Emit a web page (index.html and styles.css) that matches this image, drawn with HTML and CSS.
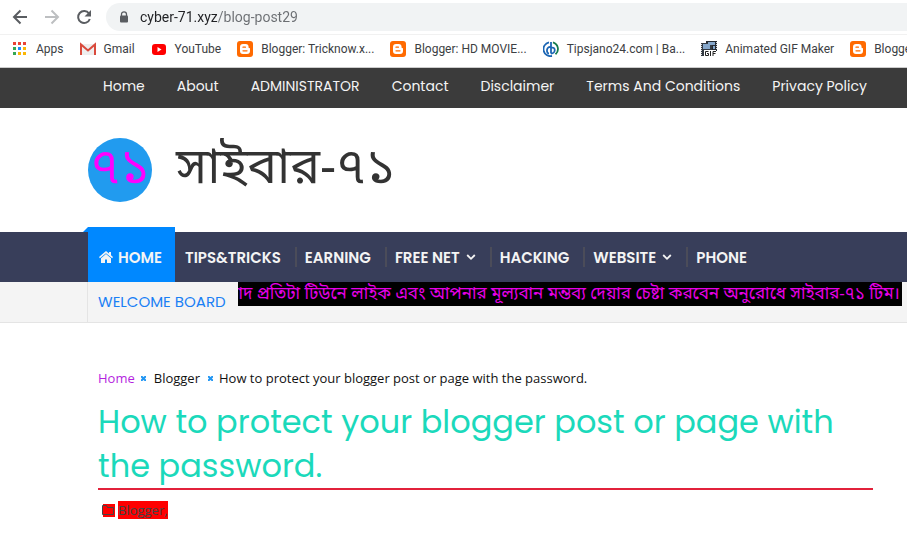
FILE: index.html
```html
<!DOCTYPE html>
<html lang="en">
<head>
  <meta charset="UTF-8">
  <title>How to protect your blogger post or page with the password.</title>
  <meta name="viewport" content="width=device-width, initial-scale=1.0">
  <link rel="stylesheet" href="styles.css">
</head>
<body>
  <svg class="defs" width="0" height="0" aria-hidden="true">
    <symbol id="blogger" viewBox="0 0 16 16">
      <rect width="16" height="16" rx="3" fill="#ff6a00"/>
      <path d="M6 3h2.600a3 3 0 0 1 3 3v.4c0 .5.3.7.8.7.4 0 .6.3.6.7V10a3 3 0 0 1-3 3H6a3 3 0 0 1-3-3V6a3 3 0 0 1 3-3z" fill="#fff"/>
      <path d="M6 6.200h2.400M6 9.800h4" stroke="#ff6a00" stroke-width="1.300" stroke-linecap="round"/>
    </symbol>
    <symbol id="chevron" viewBox="0 0 10 10">
      <path d="M1.200 3 5 6.800 8.800 3" fill="none" stroke="currentColor" stroke-width="1.800"/>
    </symbol>
  </svg>

  <div class="toolbar">
    <button type="button" class="tool" aria-label="Back">
      <svg width="16" height="16" viewBox="0 0 16 16" fill="none" stroke="#5a5d61" stroke-width="2"><path d="M15 8H2M8.500 1.500 2 8l6.500 6.500"/></svg>
    </button>
    <button type="button" class="tool" aria-label="Forward">
      <svg width="16" height="16" viewBox="0 0 16 16" fill="none" stroke="#bdbfc1" stroke-width="2"><path d="M1 8h13M7.500 1.500 14 8l-6.500 6.500"/></svg>
    </button>
    <button type="button" class="tool" aria-label="Reload">
      <svg width="16" height="16" viewBox="0 0 16 16"><path d="M13 4.500A6 6 0 1 0 13.800 10" fill="none" stroke="#5a5d61" stroke-width="2"/><path d="M15 1v6.500H8.500z" fill="#5a5d61"/></svg>
    </button>
    <div class="address">
      <svg width="10" height="12" viewBox="0 0 10 12"><path d="M2.500 5V3.300a2.500 2.500 0 0 1 5 0V5" fill="none" stroke="#5a5d61" stroke-width="1.300"/><rect x="1" y="4.500" width="8" height="7" rx="1" fill="#5a5d61"/></svg>
      <input type="text" class="url" aria-label="Address" value="cyber-71.xyz/blog-post29">
    </div>
  </div>

  <nav class="bookmarks">
    <a href="#">
      <svg width="16" height="16" viewBox="0 0 16 16"><path d="M1 1h3v3H1zM6 1h3v3H6zM11 1h3v3h-3z" fill="#ea4335"/><path d="M1 6h3v3H1zM1 11h3v3H1z" fill="#34a853"/><path d="M6 6h3v3H6z" fill="#1a8cff"/><path d="M11 6h3v3h-3zM6 11h3v3H6zM11 11h3v3h-3z" fill="#fbb605"/></svg>
      <span>Apps</span>
    </a>
    <a href="#">
      <svg width="16" height="16" viewBox="0 0 16 16"><path d="M1 3h14v11H1z" fill="#eee"/><path d="M1 14V3.500l7 6 7-6V14" fill="none" stroke="#d94a3c" stroke-width="2"/></svg>
      <span>Gmail</span>
    </a>
    <a href="#">
      <svg width="16" height="16" viewBox="0 0 16 16"><rect x="1" y="3" width="14" height="11" rx="3" fill="#f00"/><path d="m6.500 6 4 2.500-4 2.500z" fill="#fff"/></svg>
      <span>YouTube</span>
    </a>
    <a href="#"><svg width="16" height="16"><use href="#blogger"/></svg><span>Blogger: Tricknow.x...</span></a>
    <a href="#"><svg width="16" height="16"><use href="#blogger"/></svg><span>Blogger: HD MOVIE...</span></a>
    <a href="#">
      <svg width="16" height="16" viewBox="0 0 16 16" fill="none" stroke-width="1.800"><path d="M9 15A7 7 0 0 1 6 1.300" stroke="#1c66b4"/><path d="M10 1.300a7 7 0 0 1 2.500 12" stroke="#157c4c"/><path d="M8 1v11.500M8 7c5-2 5 5.500 0 5.500M8 6C3 5 3 12.500 6 12.500" stroke="#1c66b4"/></svg>
      <span>Tipsjano24.com | Ba...</span>
    </a>
    <a href="#">
      <svg width="16" height="16" viewBox="0 0 16 16"><path d="M5 0h11v10H5z" fill="#252a32"/><path d="M0 2h11v13H0z" fill="#343a43"/><path d="M7 1h7v3H7zM2 3h7v5H2zM12 5h2v3h-2z" fill="#86a7cb"/><path d="M.5 3v12M15.500 1v8" stroke="#ddd" stroke-dasharray="1 1"/><path d="M3 9h12v7H3z" fill="#fff"/><path d="M7.500 10.500H4.500v4h3v-2H6M9.500 10v5M12 15v-4.500h3M12 12.500h2.500" fill="none" stroke="#222"/></svg>
      <span>Animated GIF Maker</span>
    </a>
    <a href="#"><svg width="16" height="16"><use href="#blogger"/></svg><span>Blogger</span></a>
  </nav>

  <nav class="top-menu">
    <a href="#">Home</a>
    <a href="#">About</a>
    <a href="#">ADMINISTRATOR</a>
    <a href="#">Contact</a>
    <a href="#">Disclaimer</a>
    <a href="#">Terms And Conditions</a>
    <a href="#">Privacy Policy</a>
  </nav>

  <header class="site-header" lang="bn">
    <span class="logo">৭১</span>
    <a class="site-title" href="#">সাইবার-৭১</a>
  </header>

  <nav class="main-menu">
    <a href="#" class="active">
      <svg width="14" height="12" viewBox="0 0 14 12" fill="currentColor"><path d="M7 0 0 6l.9 1.200L7 2.200l6.100 5L14 6l-2-1.700V1h-2v1.600z"/><path d="M7 3 2 7.200V12h4V8.500h2V12h4V7.200z"/></svg>
      HOME
    </a>
    <a href="#">TIPS&amp;TRICKS</a>
    <a href="#">EARNING</a>
    <a href="#" class="has-menu">FREE NET <svg width="10" height="10"><use href="#chevron"/></svg></a>
    <a href="#">HACKING</a>
    <a href="#" class="has-menu">WEBSITE <svg width="10" height="10"><use href="#chevron"/></svg></a>
    <a href="#">PHONE</a>
  </nav>

  <div class="board">
    <div class="board-title">WELCOME BOARD</div>
    <div class="ticker" lang="bn"><span>ন্যবাদ প্রতিটা টিউনে লাইক এবং আপনার মূল্যবান মন্তব্য দেয়ার চেষ্টা করবেন অনুরোধে সাইবার-৭১ টিম।</span></div>
  </div>

  <main class="post">
    <div class="breadcrumb">
      <a href="#" class="crumb-home">Home</a>
      <svg width="5" height="5" viewBox="0 0 5 5"><path d="m0 0 5 5M5 0 0 5" stroke="#2196f3" stroke-width="2"/></svg>
      <a href="#" class="crumb">Blogger</a>
      <svg width="5" height="5" viewBox="0 0 5 5"><path d="m0 0 5 5M5 0 0 5" stroke="#2196f3" stroke-width="2"/></svg>
      <span>How to protect your blogger post or page with the password.</span>
    </div>
    <h1>How to protect your blogger post or page with the password.</h1>
    <div class="labels">
      <svg width="13" height="13" viewBox="0 0 13 13"><path d="M1 0h12v13H1z" fill="#f00"/><path d="M.5 1.500h4l1 2h6v7H.5z" fill="none" stroke="#444"/></svg>
      <a href="#">Blogger,</a>
    </div>
  </main>
</body>
</html>
```
FILE: styles.css
```css
* {
  box-sizing: border-box;
}
body {
  margin: 0;
  background: #fff;
  color: #222;
  font-family: Poppins, Inter, sans-serif;
  overflow-x: hidden;
}
a {
  color: inherit;
  text-decoration: none;
}
svg {
  flex: none;
}
.defs {
  position: absolute;
}

/* browser bar */
.toolbar {
  display: flex;
  align-items: center;
  gap: 16px;
  height: 35px;
  padding-left: 12px;
  border-bottom: 1px solid #f1f1f1;
}
.tool {
  display: flex;
  padding: 0;
  border: 0;
  background: none;
}
.address {
  flex: 1;
  display: flex;
  align-items: center;
  gap: 11px;
  height: 28px;
  margin-left: -2px;
  padding-left: 13px;
  border-radius: 14px 0 0 14px;
  background: #f1f3f4;
}
.url {
  flex: 1;
  padding: 0;
  border: 0;
  outline: 0;
  font: 14px Roboto, sans-serif;
  color: transparent;
  background: linear-gradient(90deg, #202124 77px, #6b6e72 77px);
  -webkit-background-clip: text;
  background-clip: text;
}
.bookmarks {
  display: flex;
  align-items: center;
  gap: 16px;
  height: 33px;
  padding: 0 0 4px 12px;
  border-bottom: 1px solid #ccc;
  font: 12px Roboto, sans-serif;
  color: #3c4043;
  white-space: nowrap;
  overflow: hidden;
}
.bookmarks a {
  display: flex;
  align-items: center;
  gap: 8px;
}

/* site */
.top-menu {
  display: flex;
  align-items: center;
  gap: 32px;
  height: 40px;
  padding: 0 0 4px 103px;
  background: #3b3b3b;
  color: #f4f4f4;
  font-size: 14px;
  white-space: nowrap;
}
.site-header {
  display: flex;
  align-items: center;
  gap: 24px;
  height: 124px;
  padding-left: 88px;
  font-family: "Noto Sans Bengali", "Open Sans", sans-serif;
}
.logo {
  display: flex;
  align-items: center;
  justify-content: center;
  width: 64px;
  height: 64px;
  border-radius: 50%;
  background: #219bef;
  color: #f0f;
  font-size: 50px;
  line-height: 68px;
}
.site-title {
  color: #333;
  font-size: 50px;
  line-height: 68px;
}
.main-menu {
  display: flex;
  height: 50px;
  padding-left: 88px;
  background: #383e5a;
  color: #f4f4f4;
  font-size: 15px;
  font-weight: 600;
  white-space: nowrap;
}
.main-menu a {
  position: relative;
  display: flex;
  align-items: center;
  gap: 5px;
  padding: 0 14px 0 10px;
}
.main-menu a + a + a::before {
  content: "";
  position: absolute;
  left: 0;
  top: 15px;
  width: 2px;
  height: 20px;
  background: #4b4c59;
}
.main-menu .has-menu {
  gap: 6px;
}
.main-menu .active {
  margin-top: -5px;
  padding: 5px 13px 0 11px;
  background: #0088ff;
}
.main-menu .active::before {
  content: "";
  position: absolute;
  left: -5px;
  top: 0;
  border-left: 5px solid transparent;
  border-bottom: 5px solid #0088ff;
}
.board {
  display: flex;
  height: 41px;
  padding: 0 5px 0 87px;
  background: #f4f4f4;
  border-bottom: 1px solid #e4e4e4;
}
.board-title {
  flex: none;
  width: 151px;
  padding-left: 10px;
  border-left: 1px solid #e4e4e4;
  color: #1a80f5;
  font-size: 15px;
  line-height: 39px;
}
.ticker {
  flex: 1;
  display: flex;
  justify-content: flex-end;
  height: 24px;
  padding-right: 2px;
  overflow: hidden;
  background: #000;
  color: #e800e8;
  font-family: "Noto Sans Bengali", "Open Sans", sans-serif;
  font-size: 17px;
  line-height: 26px;
  white-space: nowrap;
}
.post {
  padding: 45px 34px 34px 98px;
}
.breadcrumb {
  display: flex;
  align-items: center;
  gap: 6px;
  color: #111;
  font: 13px/20px "Open Sans", sans-serif;
}
.crumb-home {
  color: #b41fe0;
}
.crumb {
  padding: 0 2px;
}
h1 {
  margin: 12px 0 11px;
  border-bottom: 2px solid #e2213b;
  color: #1bd9bb;
  font-size: 32px;
  font-weight: 400;
  line-height: 44px;
}
.labels {
  display: flex;
  align-items: center;
  gap: 3px;
  padding-left: 4px;
  color: #444;
  font: 13px/18px "Open Sans", sans-serif;
}
.labels a {
  background: #f00;
}
```
